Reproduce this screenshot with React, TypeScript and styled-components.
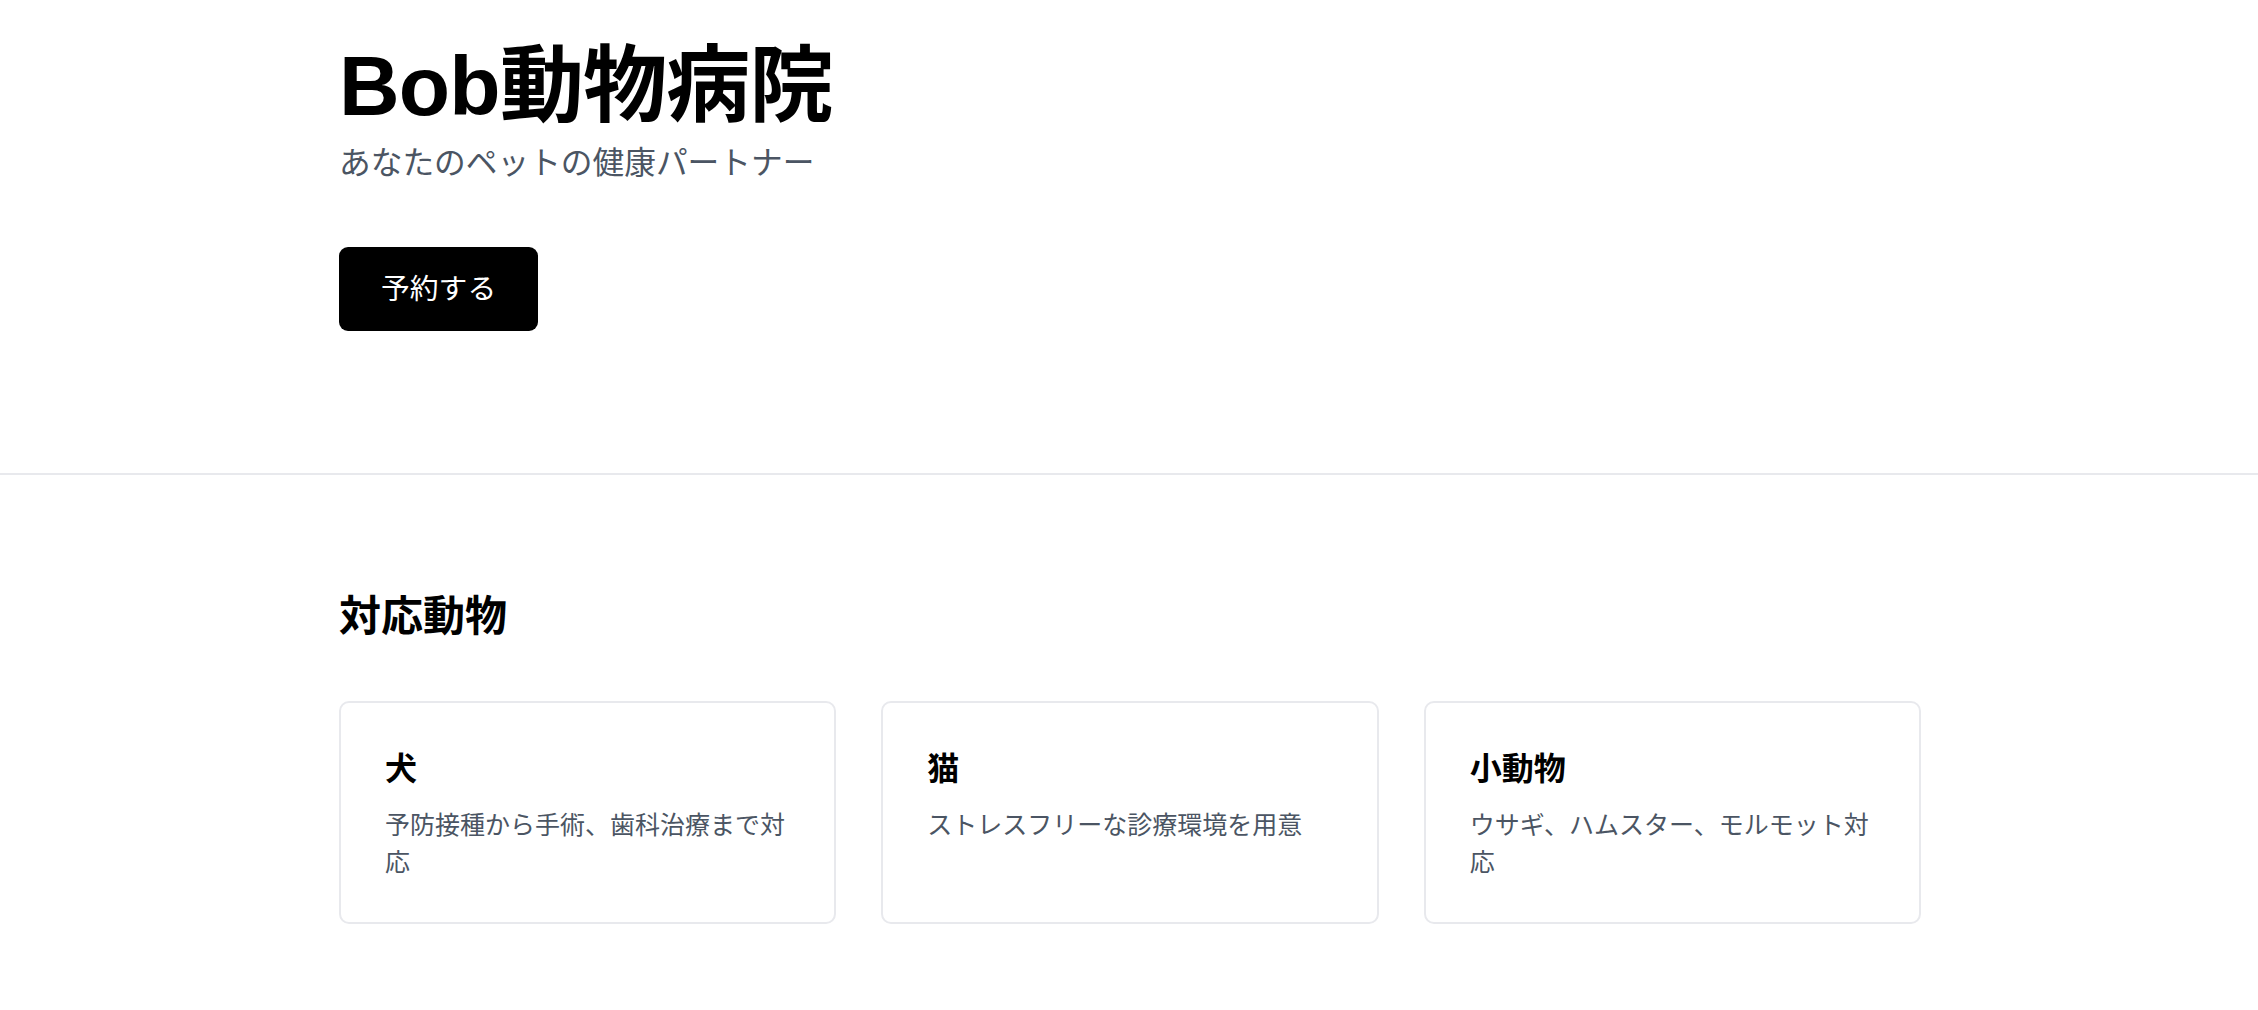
import React from "react";
import styled, { createGlobalStyle } from "styled-components";

const GlobalStyle = createGlobalStyle`
  html, body {
    margin: 0;
    padding: 0;
    background: #ffffff;
  }
  body {
    font-family: "Liberation Sans", "Noto Sans CJK JP", sans-serif;
    color: #000000;
    -webkit-font-smoothing: antialiased;
  }
  * { box-sizing: border-box; }
`;

const Page = styled.main`
  width: 100%;
`;

const Hero = styled.header`
  border-bottom: 2px solid #e8e9ed;
  padding: 36px 0 142px;
`;

const Container = styled.div`
  width: 1584px;
  margin: 0 auto;
  padding-left: 2px;
`;

const Title = styled.h1`
  margin: 0;
  font-size: 84px;
  line-height: 1.2;
  font-weight: 700;
  letter-spacing: -0.8px;
`;

const Subtitle = styled.p`
  margin: 3px 0 0;
  font-size: 31.7px;
  line-height: 1.5;
  color: #4b5563;
  font-weight: 400;
`;

const BookButton = styled.button`
  margin-top: 60px;
  height: 84px;
  padding: 0 42px;
  border: none;
  border-radius: 9px;
  background: #000000;
  color: #ffffff;
  font-family: inherit;
  font-size: 28.8px;
  line-height: 1;
  cursor: pointer;
`;

const Section = styled.section`
  padding: 113px 0 80px;
`;

const SectionTitle = styled.h2`
  margin: 0 0 54px;
  font-size: 42px;
  line-height: 1.4;
  font-weight: 700;
`;

const Grid = styled.div`
  display: grid;
  grid-template-columns: repeat(3, 1fr);
  gap: 45px;
`;

const Card = styled.article`
  border: 2px solid #e8e9ed;
  border-radius: 10px;
  padding: 44px 44px 40px;
  min-height: 220px;
`;

const CardTitle = styled.h3`
  margin: 0 0 15px;
  font-size: 32px;
  line-height: 1.4;
  font-weight: 700;
`;

const CardText = styled.p`
  margin: 0;
  font-size: 25px;
  line-height: 1.5;
  color: #4b5563;
`;

const animals = [
  { name: "犬", text: "予防接種から手術、歯科治療まで対応" },
  { name: "猫", text: "ストレスフリーな診療環境を用意" },
  { name: "小動物", text: "ウサギ、ハムスター、モルモット対応" },
];

export default function App() {
  return (
    <Page>
      <GlobalStyle />
      <Hero>
        <Container>
          <Title>Bob動物病院</Title>
          <Subtitle>あなたのペットの健康パートナー</Subtitle>
          <BookButton>予約する</BookButton>
        </Container>
      </Hero>
      <Section>
        <Container>
          <SectionTitle>対応動物</SectionTitle>
          <Grid>
            {animals.map((a) => (
              <Card key={a.name}>
                <CardTitle>{a.name}</CardTitle>
                <CardText>{a.text}</CardText>
              </Card>
            ))}
          </Grid>
        </Container>
      </Section>
    </Page>
  );
}
